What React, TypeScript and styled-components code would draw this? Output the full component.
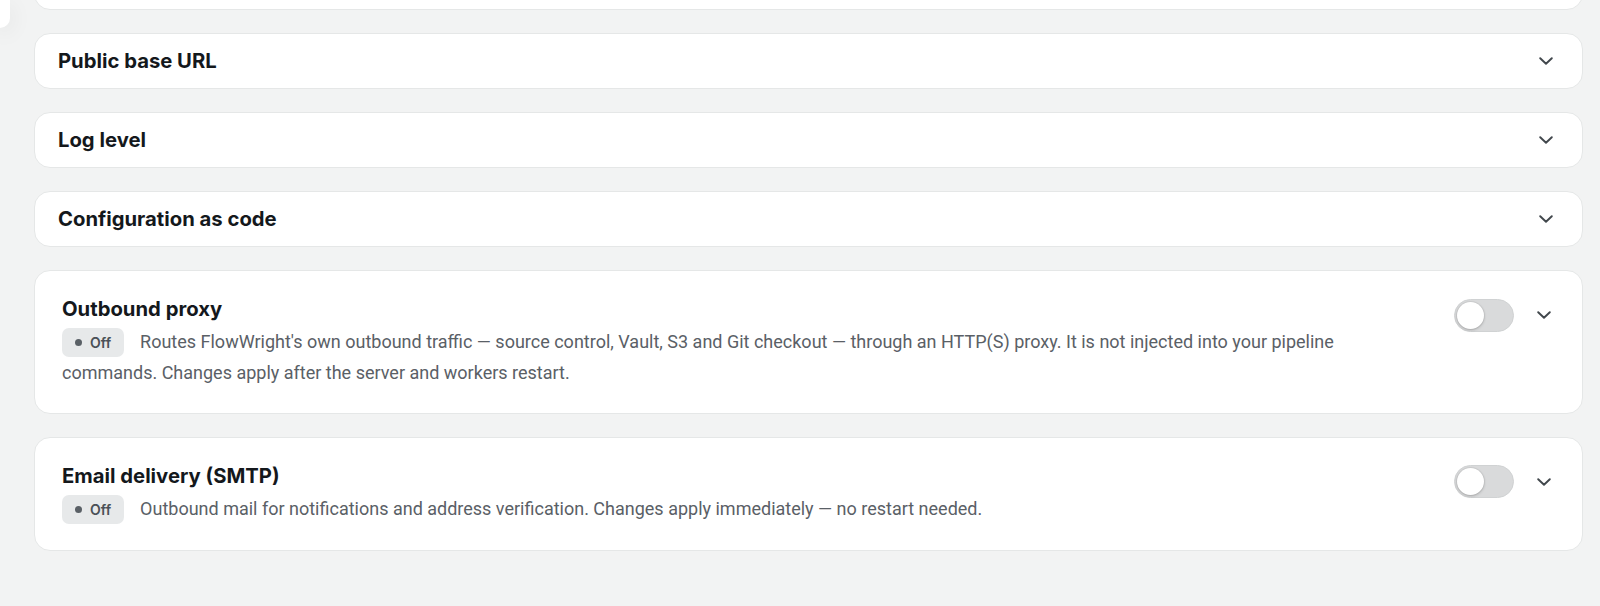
import React, { FC } from "react";
import styled, { createGlobalStyle } from "styled-components";

const GlobalStyle = createGlobalStyle`
  html, body {
    margin: 0;
    padding: 0;
    background: #f2f3f3;
  }

  body {
    font-family: "Roboto", "Liberation Sans", sans-serif;
    -webkit-font-smoothing: antialiased;
  }
`;

interface IToggleSection {
  title: string;
  description: string;
}

const collapsedSections = ["Public base URL", "Log level", "Configuration as code"];

const toggleSections: IToggleSection[] = [
  {
    title: "Outbound proxy",
    description:
      "Routes FlowWright's own outbound traffic — source control, Vault, S3 and Git checkout — through an HTTP(S) proxy. It is not injected into your pipeline commands. Changes apply after the server and workers restart.",
  },
  {
    title: "Email delivery (SMTP)",
    description:
      "Outbound mail for notifications and address verification. Changes apply immediately — no restart needed.",
  },
];

const Chevron: FC = () => (
  <svg width="14" height="8" viewBox="0 0 14 8" fill="none">
    <path d="M1.2 1.2L7 6.8l5.8-5.6" stroke="#41474c" strokeWidth="1.9" strokeLinecap="round" strokeLinejoin="round" />
  </svg>
);

const App: FC = () => {
  return (
    <Page>
      <GlobalStyle />
      <Rail />
      <SettingsList>
        {/* previous section, scrolled mostly out of view */}
        <SectionCard $clipped>
          <CollapsedHeader />
        </SectionCard>

        {collapsedSections.map((title) => (
          <SectionCard key={title}>
            <CollapsedHeader>
              <SectionTitle>{title}</SectionTitle>
              <ChevronButton aria-label="Expand">
                <Chevron />
              </ChevronButton>
            </CollapsedHeader>
          </SectionCard>
        ))}

        {toggleSections.map((section) => (
          <SectionCard key={section.title}>
            <ToggleBody>
              <SectionInfo>
                <SectionTitle>{section.title}</SectionTitle>
                <Description>
                  <StatusBadge>
                    <StatusDot />
                    Off
                  </StatusBadge>
                  {section.description}
                </Description>
              </SectionInfo>
              <SectionActions>
                <Switch role="switch" aria-checked={false}>
                  <SwitchKnob />
                </Switch>
                <ChevronButton $wide aria-label="Expand">
                  <Chevron />
                </ChevronButton>
              </SectionActions>
            </ToggleBody>
          </SectionCard>
        ))}
      </SettingsList>
    </Page>
  );
};

export default App;

const Page = styled.div`
  display: flex;
  align-items: flex-start;
  gap: 24px;
  width: 1600px;
  height: 606px;
  overflow: hidden;
`;

const Rail = styled.aside`
  flex: 0 0 10px;
  height: 28px;
  background: #ffffff;
  border-bottom-right-radius: 12px;
  box-shadow: 0 6px 22px rgba(20, 30, 40, 0.09);
`;

const SettingsList = styled.main`
  display: flex;
  flex-direction: column;
  gap: 23px;
  width: 1549px;
`;

const SectionCard = styled.section<{ $clipped?: boolean }>`
  background: #ffffff;
  border: 1px solid #e5e7e7;
  border-radius: 16px;
  margin-top: ${(p) => (p.$clipped ? "-46px" : "0")};
`;

const CollapsedHeader = styled.div`
  display: flex;
  align-items: center;
  justify-content: space-between;
  height: 54px;
  padding: 0 26px 0 23px;
`;

const SectionTitle = styled.h3`
  margin: 0;
  font-family: "Inter", "Liberation Sans", sans-serif;
  font-size: 20.25px;
  font-weight: 700;
  line-height: 28px;
  color: #14181c;
`;

const ChevronButton = styled.button<{ $wide?: boolean }>`
  display: flex;
  align-items: center;
  justify-content: center;
  width: ${(p) => (p.$wide ? "32px" : "20px")};
  height: 32px;
  padding: 0;
  border: none;
  border-radius: 8px;
  background: transparent;
  cursor: pointer;
`;

const ToggleBody = styled.div`
  display: flex;
  align-items: flex-start;
  gap: 40px;
  padding: 24px 22px 25px 27px;
`;

const SectionInfo = styled.div`
  flex: 1;
  min-width: 0;
`;

const Description = styled.p`
  margin: 4px 0 0;
  font-size: 18px;
  line-height: 30px;
  color: #5a6066;
`;

const StatusBadge = styled.span`
  display: inline-flex;
  align-items: center;
  gap: 8px;
  height: 29px;
  padding: 0 13px;
  margin-right: 16px;
  border-radius: 7px;
  background: #e7e9ea;
  color: #4a5056;
  font-family: "Inter", "Liberation Sans", sans-serif;
  font-size: 14px;
  font-weight: 600;
  line-height: 29px;
  vertical-align: middle;
  position: relative;
  top: -1px;
`;

const StatusDot = styled.span`
  width: 7px;
  height: 7px;
  border-radius: 50%;
  background: #5a6066;
`;

const SectionActions = styled.div`
  display: flex;
  align-items: center;
  gap: 14px;
  height: 40px;
`;

const Switch = styled.button`
  display: flex;
  align-items: center;
  width: 60px;
  height: 33px;
  padding: 0 2px;
  border: 1px solid #d0d2d3;
  border-radius: 17px;
  background: #d9dadb;
  cursor: pointer;
`;

const SwitchKnob = styled.span`
  width: 27px;
  height: 27px;
  border-radius: 50%;
  background: #ffffff;
  box-shadow: 0 1px 3px rgba(0, 0, 0, 0.22), 0 0 0 1px rgba(0, 0, 0, 0.04);
`;
